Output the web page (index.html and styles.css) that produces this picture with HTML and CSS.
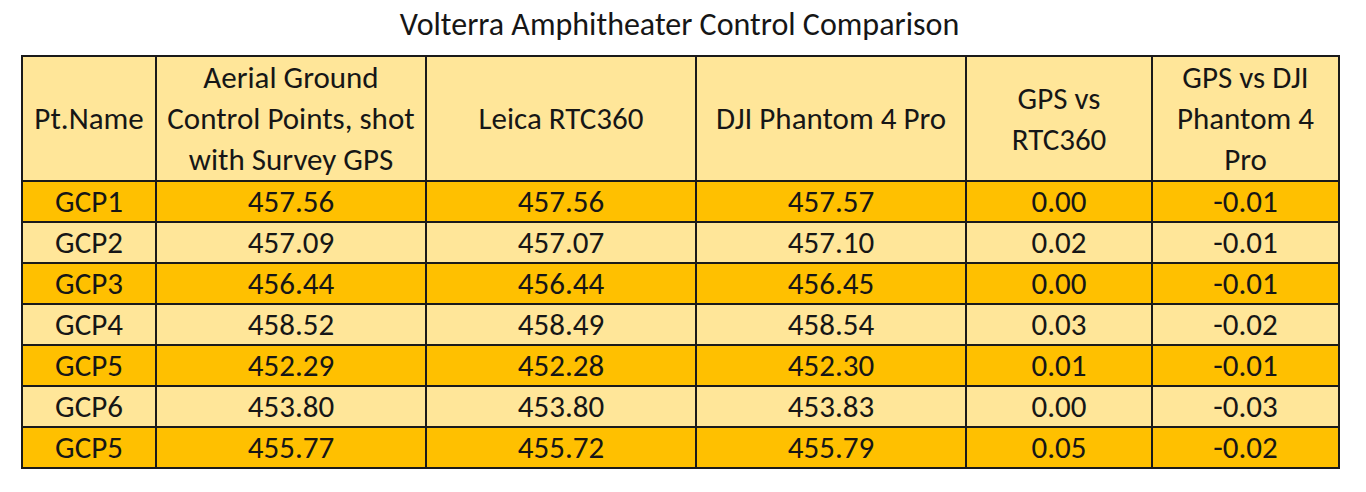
FILE: index.html
```html
<!DOCTYPE html>
<html>
<head>
<meta charset="utf-8">
<link rel="stylesheet" href="styles.css">
</head>
<body>
<div class="page">
  <h1 class="title">Volterra Amphitheater Control Comparison</h1>
  <table class="grid">
    <colgroup>
      <col class="c1"><col class="c2"><col class="c3"><col class="c4"><col class="c5"><col class="c6">
    </colgroup>
    <thead>
      <tr>
        <th>Pt.Name</th>
        <th>Aerial Ground<br>Control Points, shot<br>with Survey GPS</th>
        <th>Leica RTC360</th>
        <th>DJI Phantom 4 Pro</th>
        <th>GPS vs<br>RTC360</th>
        <th>GPS vs DJI<br>Phantom 4<br>Pro</th>
      </tr>
    </thead>
    <tbody>
      <tr class="dark"><td>GCP1</td><td>457.56</td><td>457.56</td><td>457.57</td><td>0.00</td><td>-0.01</td></tr>
      <tr class="light"><td>GCP2</td><td>457.09</td><td>457.07</td><td>457.10</td><td>0.02</td><td>-0.01</td></tr>
      <tr class="dark"><td>GCP3</td><td>456.44</td><td>456.44</td><td>456.45</td><td>0.00</td><td>-0.01</td></tr>
      <tr class="light"><td>GCP4</td><td>458.52</td><td>458.49</td><td>458.54</td><td>0.03</td><td>-0.02</td></tr>
      <tr class="dark"><td>GCP5</td><td>452.29</td><td>452.28</td><td>452.30</td><td>0.01</td><td>-0.01</td></tr>
      <tr class="light"><td>GCP6</td><td>453.80</td><td>453.80</td><td>453.83</td><td>0.00</td><td>-0.03</td></tr>
      <tr class="dark"><td>GCP5</td><td>455.77</td><td>455.72</td><td>455.79</td><td>0.05</td><td>-0.02</td></tr>
    </tbody>
  </table>
</div>
</body>
</html>
```
FILE: styles.css
```css
html, body {
  margin: 0;
  padding: 0;
  background: #ffffff;
}
.page {
  width: 1366px;
  height: 492px;
  padding-left: 21px;
  box-sizing: border-box;
  font-family: "Carlito", "Lato", "Liberation Sans", sans-serif;
  color: #161616;
}
.title {
  margin: 0;
  width: 1317px;
  height: 55px;
  line-height: 50px;
  font-size: 32px;
  font-weight: normal;
  text-align: center;
}
.grid {
  border-collapse: collapse;
  width: 1317px;
  table-layout: fixed;
  font-size: 31px;
}
.c1 { width: 134px; }
.c2 { width: 270px; }
.c3 { width: 270px; }
.c4 { width: 270px; }
.c5 { width: 186px; }
.c6 { width: 187px; }
.grid th, .grid td {
  border: 2px solid #1a1a1a;
  text-align: center;
  vertical-align: middle;
  padding: 0;
  font-weight: normal;
}
.grid th {
  background: #ffe699;
  height: 121px;
  line-height: 41px;
}
.grid td {
  height: 39px;
  line-height: 39px;
}
.dark td { background: #ffc000; }
.light td { background: #ffe699; }
```
